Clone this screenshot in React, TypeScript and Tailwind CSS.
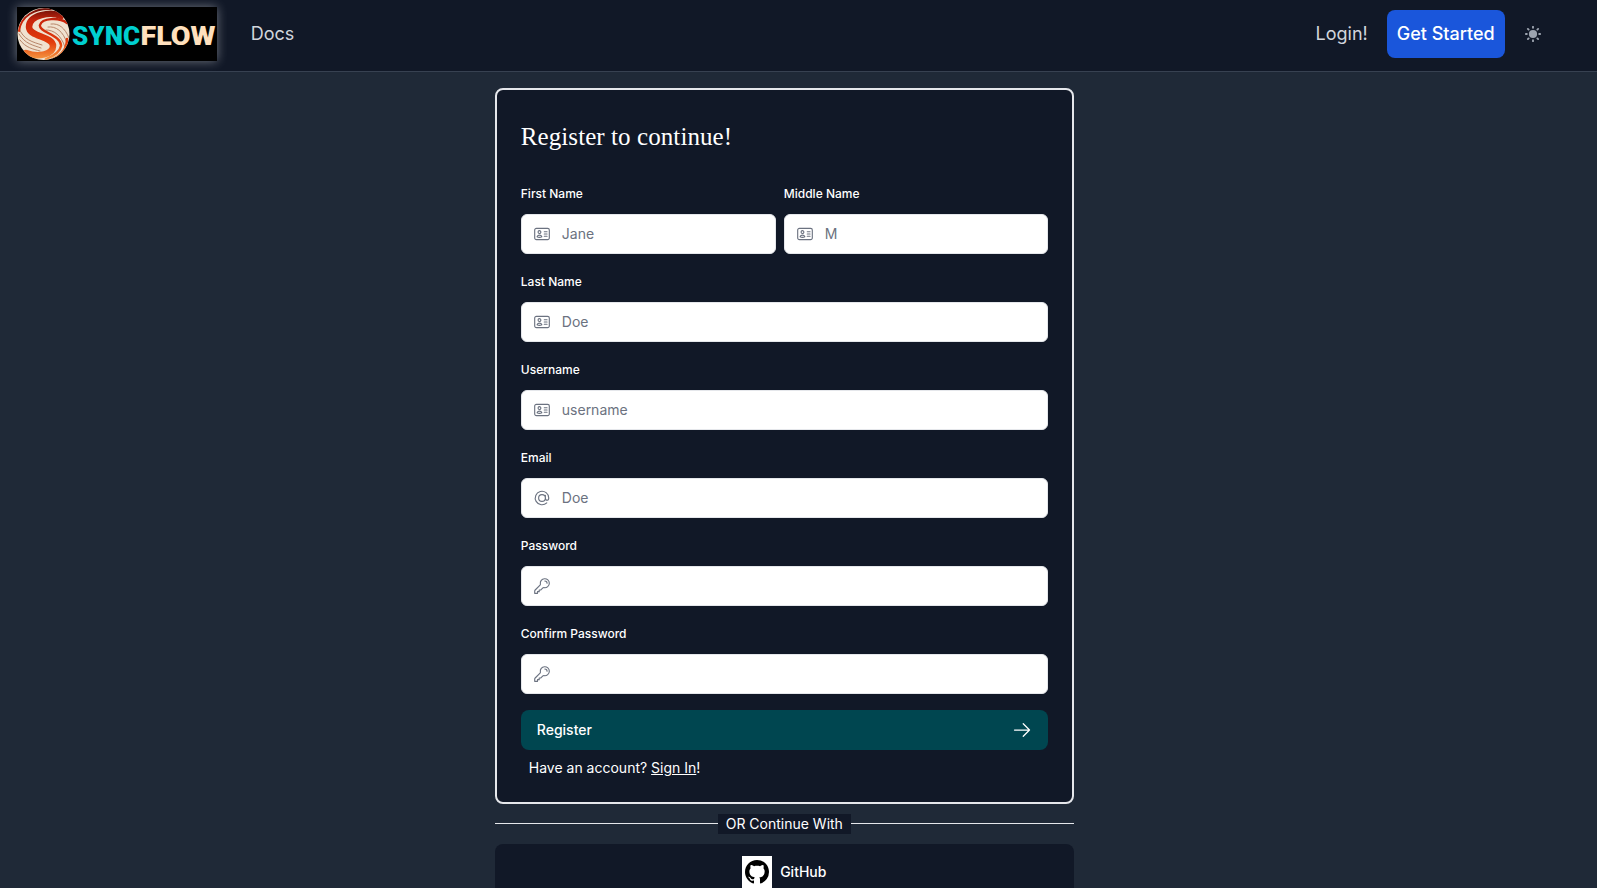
import {
  HiOutlineIdentification,
  HiOutlineAtSymbol,
  HiOutlineKey,
  HiOutlineArrowRight,
} from "react-icons/hi2";
import type { IconType } from "react-icons";

function Logo() {
  return (
    <svg
      width="200"
      height="54"
      viewBox="0 0 200 54"
      className="block shrink-0 bg-black shadow-[0_0_10px_rgba(255,255,255,0.4)]"
      role="img"
    >
      <defs>
        <clipPath id="ball">
          <circle cx="26.5" cy="27" r="26" />
        </clipPath>
        <linearGradient id="flame" gradientUnits="userSpaceOnUse" x1="0" y1="0" x2="0" y2="54">
          <stop offset="0" stopColor="#5d0d08" />
          <stop offset="0.25" stopColor="#c9250c" />
          <stop offset="0.65" stopColor="#e23c0c" />
          <stop offset="1" stopColor="#f8a046" />
        </linearGradient>
      </defs>
      <g clipPath="url(#ball)" fill="none" strokeLinecap="round">
        <rect width="54" height="54" fill="#f0e2d0" />
        <g stroke="#b07a5e" strokeWidth="0.9">
          <path d="M31 20C39 19 46 24 50 36" />
          <path d="M29 23C37 23 44 28 48 40" />
          <path d="M34 17C42 16 48 21 52 31" />
          <path d="M2 21C6 33 16 35 25 38" />
          <path d="M2 27C8 37 16 38 24 41" />
          <path d="M3 33C9 41 16 42 23 44" />
        </g>
        <g stroke="url(#flame)">
          <path d="M44 9C34 4 12 8 12 20C12 30 36 29 36 39C36 47 22 51 9 46" strokeWidth="6.5" />
          <path d="M50 16C42 10 25 11 23 18C21 25 45 28 44 39C43 45 37 49 29 52" strokeWidth="2.4" />
          <path d="M2 24C4 9 18 1 34 2" strokeWidth="2" />
          <path d="M50 32C50 41 45 48 36 52" strokeWidth="2.5" />
        </g>
      </g>
      <g fontFamily="Roboto, sans-serif" fontSize="25" fontWeight="900">
        <text x="55" y="38" fill="#00cfd0" textLength="68" lengthAdjust="spacingAndGlyphs">
          SYNC
        </text>
        <text x="123.5" y="38" fill="#ffe0bd" textLength="75" lengthAdjust="spacingAndGlyphs">
          FLOW
        </text>
      </g>
    </svg>
  );
}

function Sun() {
  return (
    <svg width="16" height="16" viewBox="0 0 16 16" className="text-gray-400">
      <circle cx="8" cy="8" r="4.1" fill="currentColor" />
      <path
        d="M8 .8v1M8 14.2v1M.8 8h1M14.2 8h1M2.9 2.9l.7.7M12.4 12.4l.7.7M2.9 13.1l.7-.7M12.4 3.6l.7-.7"
        stroke="currentColor"
        strokeWidth="1.9"
        strokeLinecap="round"
      />
    </svg>
  );
}

function Field({
  label,
  placeholder,
  icon: Icon,
  type = "text",
  className = "",
}: {
  label: string;
  placeholder?: string;
  icon: IconType;
  type?: string;
  className?: string;
}) {
  return (
    <label className={`block ${className}`}>
      <span className="mt-5 mb-3 block text-xs leading-4 font-medium text-white">{label}</span>
      <span className="flex h-10 items-center gap-[11px] rounded-md border border-gray-200 bg-white px-[11px] text-gray-500">
        <Icon className="h-[18px] w-[18px] shrink-0" />
        <input
          type={type}
          placeholder={placeholder}
          className="w-full min-w-0 bg-transparent text-sm outline-none placeholder:text-gray-500"
        />
      </span>
    </label>
  );
}

export default function App() {
  return (
    <div className="h-[888px] overflow-hidden bg-gray-800 font-['Inter',sans-serif] text-white [--color-gray-200:#e5e7eb] [--color-gray-400:#9ca3af] [--color-gray-500:#6b7280] [--color-gray-700:#374151] [--color-gray-800:#1f2937] [--color-gray-900:#111827]">
      <header className="flex h-[72px] items-center border-b border-gray-700 bg-gray-900 pr-[56px] pb-[3px] pl-[17px]">
        <Logo />
        <a className="ml-[33.7px] text-lg text-gray-300">Docs</a>
        <a className="ml-auto text-lg text-gray-300">Login!</a>
        <a className="mr-[20.3px] ml-[19px] flex h-12 items-center rounded-lg bg-[#1a56db] px-[10px] text-lg font-medium">
          Get Started
        </a>
        <Sun />
      </header>

      <main className="mt-4 ml-[494.8px] w-[579px]">
        <form className="h-[716px] rounded-lg border-2 border-gray-200 bg-gray-900 px-6 pt-[31px]">
          <h1 className="font-['Liberation_Serif',serif] text-[25px] leading-8 tracking-[0.08px]">
            Register to continue!
          </h1>
          <div className="mt-[33px] flex gap-2">
            <Field
              label="First Name"
              placeholder="Jane"
              icon={HiOutlineIdentification}
              className="w-[255px] [&>span:first-child]:mt-0"
            />
            <Field
              label="Middle Name"
              placeholder="M"
              icon={HiOutlineIdentification}
              className="w-[264px] [&>span:first-child]:mt-0"
            />
          </div>
          <Field label="Last Name" placeholder="Doe" icon={HiOutlineIdentification} />
          <Field label="Username" placeholder="username" icon={HiOutlineIdentification} />
          <Field label="Email" placeholder="Doe" icon={HiOutlineAtSymbol} />
          <Field label="Password" type="password" icon={HiOutlineKey} />
          <Field label="Confirm Password" type="password" icon={HiOutlineKey} />
          <button
            type="button"
            className="mt-4 flex h-10 w-full items-center justify-between rounded-lg bg-[#004650] px-4 text-sm font-medium"
          >
            Register
            <HiOutlineArrowRight className="h-5 w-5" />
          </button>
          <p className="mt-2 ml-2 text-sm">
            Have an account? <a className="underline">Sign In</a>!
          </p>
        </form>

        <div className="mt-[10px] flex items-center">
          <span className="mb-px h-px flex-1 bg-gray-200" />
          <span className="bg-gray-900 px-2 text-sm">OR Continue With</span>
          <span className="mb-px h-px flex-1 bg-gray-200" />
        </div>

        <button
          type="button"
          className="mt-[10px] flex w-full items-center justify-center gap-2 rounded-lg bg-gray-900 py-3 text-sm font-medium"
        >
          <span className="flex h-8 w-[30px] items-center justify-center bg-white">
            <svg width="24" height="24" viewBox="0 0 16 16" fill="#000">
              <path d="M8 0C3.58 0 0 3.58 0 8c0 3.54 2.29 6.53 5.47 7.59.4.07.55-.17.55-.38 0-.19-.01-.82-.01-1.49-2.01.37-2.53-.49-2.69-.94-.09-.23-.48-.94-.82-1.13-.28-.15-.68-.52-.01-.53.63-.01 1.08.58 1.23.82.72 1.21 1.87.87 2.33.66.07-.52.28-.87.51-1.07-1.78-.2-3.64-.89-3.64-3.95 0-.87.31-1.59.82-2.15-.08-.2-.36-1.02.08-2.12 0 0 .67-.21 2.2.82.64-.18 1.32-.27 2-.27s1.36.09 2 .27c1.53-1.04 2.2-.82 2.2-.82.44 1.1.16 1.92.08 2.12.51.56.82 1.27.82 2.15 0 3.07-1.87 3.75-3.65 3.95.29.25.54.73.54 1.48 0 1.07-.01 1.93-.01 2.2 0 .21.15.46.55.38A8.01 8.01 0 0 0 16 8c0-4.42-3.58-8-8-8z" />
            </svg>
          </span>
          GitHub
        </button>
      </main>
    </div>
  );
}
